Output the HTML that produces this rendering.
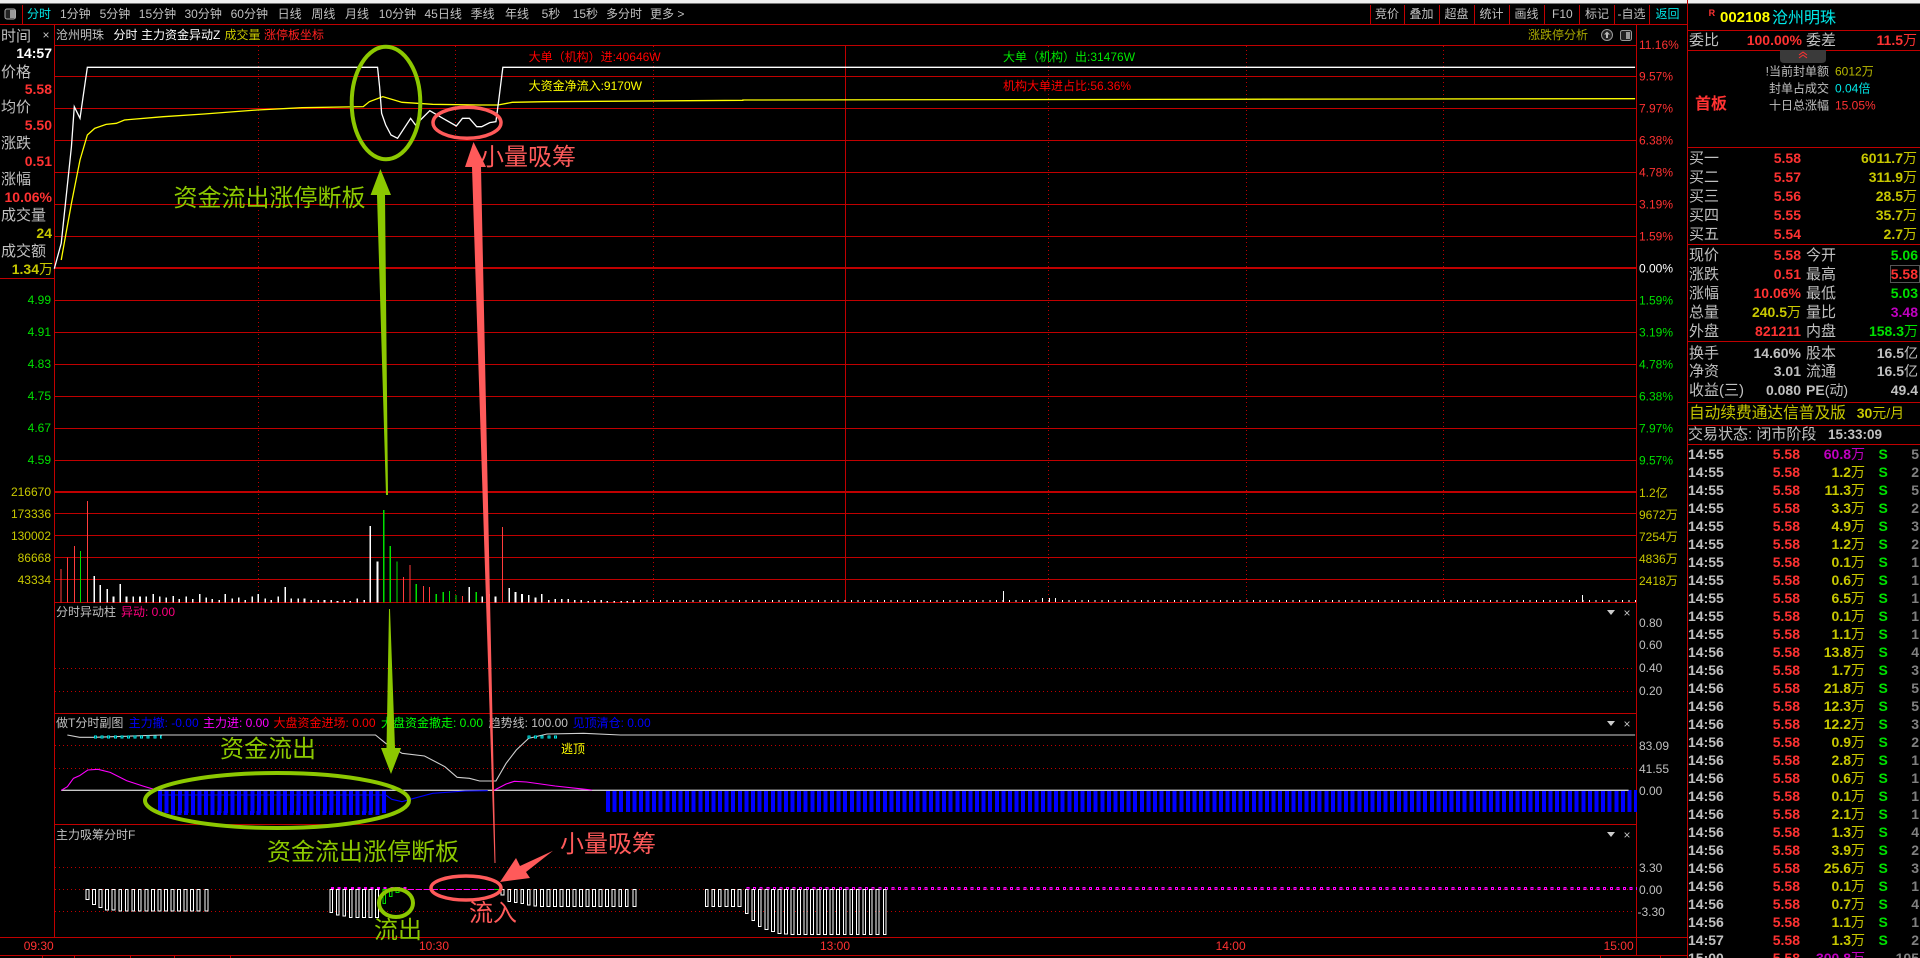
<!DOCTYPE html>
<html lang="zh"><head><meta charset="utf-8"><title>沧州明珠 分时</title>
<style>
html,body{margin:0;padding:0;background:#000;width:1920px;height:958px;overflow:hidden}
svg{display:block;position:absolute;left:0;top:0}
text{font-family:"Liberation Sans","WenQuanYi Zen Hei","Noto Sans CJK SC",sans-serif;font-size:12px;white-space:pre}
.g{fill:#c0c0c0}.y{fill:#c8c800}.r{fill:#ff3232}.gr{fill:#00e000}.c{fill:#00e8e8}.w{fill:#fff}.m{fill:#c000c0}
.l{font-size:15px;fill:#c0c0c0}
.b{font-size:14px;font-weight:700}
.wn{font-size:14px;font-weight:400}
.e{text-anchor:end}
.big{font-size:24px}
.gn{fill:#8cc800}.co{fill:#ff5a5a}
.v *{vector-effect:non-scaling-stroke}
.ae{shape-rendering:crispEdges}
</style></head><body>
<svg width="1920" height="958" viewBox="0 0 1920 958" xmlns="http://www.w3.org/2000/svg">
<rect width="1920" height="958" fill="#000"/>
<rect width="1920" height="3.5" fill="#efefef"/>

<!-- grid -->
<g class="ae" fill="none" stroke="#c00000" stroke-width="1">
<path d="M0 24.5H1687M54 45.5H1636M54 76.5H1636M54 108.5H1636M54 140.5H1636M54 172.5H1636M54 204.5H1636M54 236.5H1636M54 300.5H1636M54 332.5H1636M54 364.5H1636M54 396.5H1636M54 428.5H1636M54 460.5H1636M54 513.5H1636M54 535.5H1636M54 557.5H1636M54 579.5H1636M54 602.5H1636M54 713.5H1636M54 824.5H1636M0 937.5H1687M0 955.5H1687M0 278.5H54"/>
<path d="M54.5 24V937M1636.5 24V955M1687.5 0V958M22.5 5V24M845.5 46V602"/>
<path d="M1370.5 5V24M1404.5 5V24M1439.5 5V24M1474.5 5V24M1509.5 5V24M1544.5 5V24M1579.5 5V24M1614.5 5V24M1649.5 5V24"/>
<path d="M1687 30.5H1920M1687 50.5H1920M1687 147.5H1920M1687 244.5H1920M1687 341.5H1920M1687 402.5H1920M1687 425.5H1920M1687 444.5H1920"/>
<path d="M42.5 955V958M74.5 955V958M130.5 955V958M174.5 955V958M230.5 955V958M1600.5 955V958M1660.5 955V958"/>
<path stroke-width="2" d="M54 268H1636M54 492H1636"/>
<path stroke-dasharray="1 3" d="M258.5 46V602M455.5 46V602M653.5 46V602M1048.5 46V602M1246.5 46V602M1443.5 46V602"/>
<path stroke-dasharray="1 3" d="M55 668.5H1634M55 691.5H1634M55 745.5H1634M55 768.5H1634M55 867.5H1634M55 889.5H1634M55 911.5H1634"/>
</g>

<!-- nav -->
<rect x="5" y="9" width="10.5" height="10" rx="2" fill="#222" stroke="#aaa"/><rect x="10" y="10" width="5" height="8" fill="#999"/>
<text x="27" y="18" class="c">分时</text>
<g class="g">
<text x="60" y="18">1分钟</text><text x="99.6" y="18">5分钟</text><text x="138.8" y="18">15分钟</text><text x="184.5" y="18">30分钟</text><text x="230.6" y="18">60分钟</text><text x="277.6" y="18">日线</text><text x="311.4" y="18">周线</text><text x="345" y="18">月线</text><text x="378.8" y="18">10分钟</text><text x="424.5" y="18">45日线</text><text x="470.6" y="18">季线</text><text x="505" y="18">年线</text><text x="541.6" y="18">5秒</text><text x="572.7" y="18">15秒</text><text x="606" y="18">多分时</text><text x="650" y="18">更多 &gt;</text>
<text x="1375" y="18">竞价</text><text x="1409.5" y="18">叠加</text><text x="1444.5" y="18">超盘</text><text x="1479.5" y="18">统计</text><text x="1514.5" y="18">画线</text><text x="1552" y="18">F10</text><text x="1585" y="18">标记</text><text x="1617.5" y="18">-自选</text>
</g>
<text x="1655.5" y="18" class="c">返回</text>

<!-- left column -->
<text x="46" y="39" class="g e" style="text-anchor:middle">×</text>
<text x="1" y="41" class="l">时间</text>
<text x="52" y="58" class="b w e">14:57</text>
<text x="1" y="77" class="l">价格</text><text x="52" y="94" class="b r e">5.58</text>
<text x="1" y="112" class="l">均价</text><text x="52" y="130" class="b r e">5.50</text>
<text x="1" y="148" class="l">涨跌</text><text x="52" y="166" class="b r e">0.51</text>
<text x="1" y="184" class="l">涨幅</text><text x="52" y="202" class="b r e">10.06%</text>
<text x="1" y="220" class="l">成交量</text><text x="52" y="238" class="b y e">24</text>
<text x="1" y="256" class="l">成交额</text><text x="53" y="274" class="b y e">1.34<tspan class="wn">万</tspan></text>
<g class="gr e"><text x="51" y="304" class="gr e">4.99</text><text x="51" y="336" class="gr e">4.91</text><text x="51" y="368" class="gr e">4.83</text><text x="51" y="400" class="gr e">4.75</text><text x="51" y="432" class="gr e">4.67</text><text x="51" y="464" class="gr e">4.59</text></g>
<text x="51" y="496" class="y e">216670</text><text x="51" y="518" class="y e">173336</text><text x="51" y="540" class="y e">130002</text><text x="51" y="562" class="y e">86668</text><text x="51" y="584" class="y e">43334</text>

<!-- headers -->
<text x="56" y="39" class="g">沧州明珠</text><text x="113.5" y="39" class="w">分时</text><text x="141" y="39" class="w">主力资金异动Z</text><text x="224.5" y="39" class="y">成交量</text><text x="264" y="39" class="r" style="fill:#ff2020">涨停板坐标</text>
<text x="1528" y="39" style="fill:#a8a800">涨跌停分析</text>
<circle cx="1607" cy="35" r="5.5" fill="#222" stroke="#999"/><path d="M1607 31.5l3 3h-2v3.5h-2v-3.5h-2z" fill="#bbb"/>
<rect x="1620.5" y="30.5" width="11" height="10" rx="2" fill="#222" stroke="#999"/><rect x="1626" y="32" width="4" height="7" fill="#999"/>
<text x="56" y="616" class="g">分时异动柱</text><text x="121" y="616" style="fill:#ff0080">异动: 0.00</text>
<text x="56" y="727" class="g">做T分时副图</text><text x="128.6" y="727" style="fill:#0000ff">主力撤: -0.00</text><text x="203" y="727" style="fill:#ff00ff">主力进: 0.00</text><text x="273.5" y="727" style="fill:#ff0000">大盘资金进场: 0.00</text><text x="381" y="727" style="fill:#00ff00">大盘资金撤走: 0.00</text><text x="488.6" y="727" class="g">趋势线: 100.00</text><text x="572.6" y="727" style="fill:#0000ff">见顶清仓: 0.00</text>
<text x="56" y="839" class="g">主力吸筹分时F</text>
<text x="561" y="753" style="fill:#ffff00">逃顶</text>
<g fill="#ccc"><path d="M1607 610h8l-4 5zM1607 721h8l-4 5zM1607 832h8l-4 5z"/></g>
<g class="g" style="text-anchor:middle"><text x="1627" y="617">×</text><text x="1627" y="728">×</text><text x="1627" y="839">×</text></g>

<text x="528.6" y="61" style="fill:#ff0000">大单（机构）进:40646W</text>
<text x="528.6" y="90" style="fill:#ffff00">大资金净流入:9170W</text>
<text x="1003" y="61" style="fill:#00e800">大单（机构）出:31476W</text>
<text x="1003" y="90" style="fill:#ff0000">机构大单进占比:56.36%</text>

<!-- right axis -->
<text x="1639" y="49" class="r">11.16%</text><text x="1639" y="80.5" class="r">9.57%</text><text x="1639" y="112.5" class="r">7.97%</text><text x="1639" y="144.5" class="r">6.38%</text><text x="1639" y="176.5" class="r">4.78%</text><text x="1639" y="208.5" class="r">3.19%</text><text x="1639" y="240.5" class="r">1.59%</text><text x="1639" y="272.5" class="w">0.00%</text>
<text x="1639" y="304.5" class="gr">1.59%</text><text x="1639" y="336.5" class="gr">3.19%</text><text x="1639" y="368.5" class="gr">4.78%</text><text x="1639" y="400.5" class="gr">6.38%</text><text x="1639" y="432.5" class="gr">7.97%</text><text x="1639" y="464.5" class="gr">9.57%</text>
<text x="1639" y="497" class="y">1.2亿</text><text x="1639" y="519" class="y">9672万</text><text x="1639" y="541" class="y">7254万</text><text x="1639" y="563" class="y">4836万</text><text x="1639" y="585" class="y">2418万</text>
<g class="g"><text x="1639" y="627">0.80</text><text x="1639" y="649">0.60</text><text x="1639" y="672">0.40</text><text x="1639" y="695">0.20</text><text x="1639" y="750">83.09</text><text x="1639" y="773">41.55</text><text x="1639" y="795">0.00</text><text x="1639" y="872">3.30</text><text x="1639" y="894">0.00</text><text x="1637.5" y="916">-3.30</text></g>
<g class="r"><text x="23.7" y="950">09:30</text><text x="419" y="950">10:30</text><text x="820" y="950">13:00</text><text x="1215.6" y="950">14:00</text><text x="1603.6" y="950">15:00</text></g>

<!-- main lines -->
<g class="v" transform="scale(.40816,.33333)" fill="none" stroke-width="1.3">
<polyline stroke="#ffff00" points="150,780 175,610 196,480 214,405 232,385 260,373 285,370 305,360 400,350 500,342 630,330 740,323 890,320 905,305 938,290 985,307 1060,313 1175,315 1220,315 1255,307 1335,305 1820,301 1820,300 4006,296"/>
<polyline stroke="#ffffff" points="133,806 150,730 175,440 182,320 196,355 214,202 925,202 930,260 935,340 945,375 958,405 974,415 1006,355 1018,375 1030,360 1053,332 1085,355 1118,378 1133,355 1150,355 1168,380 1180,380 1200,368 1215,365 1222,300 1232,202 4006,202"/>
</g>

<!-- volume bars -->
<g class="v ae" transform="translate(0,480) scale(.40816,.33333)" fill="none">
<path stroke="#fff" stroke-width="1.6" d="M231 367V288M246 367V315M263 367V327M278 367V350M295 367V312M310 367V350M326 367V350M343 367V350M358 367V350M375 367V342M391 367V350M407 367V353M424 367V348M439 367V357M456 367V350M472 367V357M489 367V342M505 367V353M520 367V357M537 367V360M552 367V342M569 367V356M585 367V353M601 367V360M618 367V350M633 367V342M650 367V356M665 367V360M682 367V350M699 367V321M714 367V356M731 367V356M746 367V356M763 367V360M780 367V360M795 367V360M812 367V360M827 367V363M843 367V360M858 367V363M875 367V356M892 367V360M907 367V138M925 367V245M1150 367V321M1182 367V350M1198 367V342M1214 367V350M1248 367V324M1263 367V336M1279 367V342M1295 367V345M1312 367V353M1327 367V342M1344 367V360M1360 367V357M1376 367V357M1392 367V357M1408 367V360M1424 367V360M1441 367V363M1457 367V360M1473 367V360M1488 367V363M1505 367V363M1522 367V363M1537 367V363M1553 367V360"/>
<path stroke="#ff3c3c" stroke-width="1" d="M150 367V267M165 367V233M182 367V198M214 367V63M988 367V291M1005 367V255M1037 367V318M1052 367V321M1133 367V348M1231 367V141"/>
<path stroke="#00e000" stroke-width="1.2" d="M197 367V213M940 367V90M956 367V198M973 367V245M1020 367V312M1069 367V342M1086 367V336M1101 367V333M1117 367V345M1167 367V336"/>
</g>
<line class="ae" x1="640" y1="601" x2="1636" y2="601" stroke="#fff" stroke-width="2" stroke-dasharray="1 5.59"/>
<path class="ae" stroke="#fff" fill="none" d="M1003.5 602V591M1042.5 602V598M1049.5 602V598M1055.5 602V598M1582.5 602V595"/>

<!-- pane 3 -->
<g class="ae">
<line x1="158" y1="801.5" x2="386" y2="801.5" stroke="#0000ff" stroke-width="23" stroke-dasharray="4 2.59"/>
<line x1="171" y1="813" x2="380" y2="813" stroke="#0000ff" stroke-width="4" stroke-dasharray="4 2.59"/>
<line x1="606" y1="801" x2="1637" y2="801" stroke="#0000ff" stroke-width="22" stroke-dasharray="4 2.59"/>
</g>
<g class="v" transform="translate(0,710) scale(.40816,.33333)" fill="none" stroke-width="1.1">
<path stroke="#c8c8c8" stroke-width="1.3" d="M150 241H3990"/>
<polyline stroke="#0000ff" points="387,255 945,255 960,268 985,275 1005,268 1060,250 1140,243 1195,242"/>
<polyline stroke="#d0d0d0" points="165,75 195,82 230,82 395,75 920,75 945,100 985,130 1040,138 1090,170 1120,202 1150,205 1175,213 1215,213 1240,160 1265,120 1295,85 1340,72 1430,70 1520,75 4006,75"/>
<polyline stroke="#ff00ff" points="150,241 165,230 180,205 195,197 215,180 240,178 270,187 310,212 350,228 385,241"/>
<polyline stroke="#ff00ff" points="1210,241 1240,222 1260,214 1290,216 1360,228 1420,236 1450,240"/>
</g>
<g class="ae">
<line x1="94" y1="737" x2="162" y2="737" stroke="#00e8e8" stroke-width="3" stroke-dasharray="3 3.59"/>
<line x1="95" y1="737" x2="162" y2="737" stroke="#000" stroke-width="1" stroke-dasharray="1 5.59"/>
<line x1="527.5" y1="737" x2="557" y2="737" stroke="#00e8e8" stroke-width="3" stroke-dasharray="3 3.59"/>
<line x1="528.5" y1="737" x2="557" y2="737" stroke="#000" stroke-width="1" stroke-dasharray="1 5.59"/>
</g>

<!-- pane 4 -->
<g class="ae">
<line x1="746.5" y1="888.5" x2="1637" y2="888.5" stroke="#ff00ff" stroke-width="3" stroke-dasharray="3 3.59"/>
<line x1="747.5" y1="888.5" x2="1637" y2="888.5" stroke="#000" stroke-width="1" stroke-dasharray="1 5.59"/>
<line x1="331" y1="888.5" x2="408" y2="888.5" stroke="#ff00ff" stroke-width="3" stroke-dasharray="3 3.59"/>
<line x1="408" y1="889.5" x2="500" y2="889.5" stroke="#ff00ff" stroke-width="1" stroke-dasharray="6 2"/>
<line x1="494" y1="889.5" x2="501" y2="889.5" stroke="#00e000" stroke-width="1"/>
</g>
<g class="v ae" transform="translate(0,710) scale(.40816,.33333)" fill="#000" stroke="#fff" stroke-width="1">
<path d="M211 538h7v31h-7zM227 538h7v46h-7zM243 538h7v54h-7zM259 538h7v62h-7zM275 538h7v62h-7zM291 538h7v65h-7zM307 538h7v65h-7zM323 538h7v65h-7zM339 538h7v65h-7zM355 538h7v65h-7zM371 538h7v65h-7zM387 538h7v65h-7zM403 538h7v65h-7zM419 538h7v65h-7zM435 538h7v65h-7zM451 538h7v65h-7zM467 538h7v65h-7zM483 538h7v65h-7zM502 538h7v65h-7z"/>
<path d="M808 538h7v70h-7zM824 538h7v77h-7zM840 538h7v80h-7zM856 538h7v84h-7zM872 538h7v84h-7zM888 538h7v84h-7zM904 538h7v84h-7zM920 538h7v84h-7z"/>
<path stroke="#00e000" d="M938 538h7v42h-7zM954 538h7v22h-7zM970 538h7v10h-7z"/>
</g>
<g class="v ae" transform="translate(400,710) scale(.40816,.33333)" fill="#000" stroke="#fff" stroke-width="1">
<path d="M248 538h7v17h-7zM264 538h7v37h-7zM280 538h7v39h-7zM296 538h7v42h-7zM312 538h7v47h-7zM328 538h7v50h-7zM344 538h7v52h-7zM360 538h7v52h-7zM376 538h7v52h-7zM392 538h7v52h-7zM408 538h7v52h-7zM424 538h7v52h-7zM440 538h7v52h-7zM456 538h7v52h-7zM472 538h7v52h-7zM488 538h7v52h-7zM504 538h7v52h-7zM520 538h7v52h-7zM536 538h7v52h-7zM552 538h7v52h-7zM571 538h7v52h-7z"/>
<path d="M748 538h7v52h-7zM764 538h7v52h-7zM780 538h7v52h-7zM796 538h7v52h-7zM812 538h7v52h-7zM828 538h7v52h-7z"/>
<path d="M846 538h7v73h-7zM862 538h7v94h-7zM878 538h7v112h-7zM894 538h7v120h-7zM910 538h7v127h-7zM926 538h7v132h-7zM942 538h7v134h-7zM958 538h7v135h-7zM974 538h7v135h-7zM990 538h7v135h-7zM1006 538h7v135h-7zM1022 538h7v135h-7zM1038 538h7v135h-7zM1054 538h7v135h-7zM1070 538h7v135h-7zM1086 538h7v135h-7zM1102 538h7v135h-7zM1118 538h7v135h-7zM1134 538h7v135h-7zM1150 538h7v135h-7zM1166 538h7v135h-7zM1184 538h7v135h-7z"/>
</g>

<!-- right panel -->
<text x="1708.6" y="16" style="fill:#ff3232;font-size:9px;font-weight:700">R</text>
<text x="1720" y="22" class="b" style="fill:#ffff00;font-size:15px">002108</text>
<text x="1772" y="23" style="fill:#00e8e8;font-size:16px">沧州明珠</text>
<text x="1689" y="45" class="l">委比</text><text x="1802" y="45" class="b r e">100.00%</text><text x="1806" y="45" class="l">委差</text><text x="1917" y="45" class="b r e">11.5<tspan class="wn">万</tspan></text>
<path d="M1780 50h46v9q0 4-4 4h-38q-4 0-4-4z" fill="#3a3a3a"/><path d="M1799 55l4-3 4 3M1799 58l4-3 4 3" fill="none" stroke="#ff3232"/>
<text x="1829" y="75.5" class="g e">!当前封单额</text><text x="1835" y="75.5" style="fill:#b8b800">6012万</text>
<text x="1829" y="92.5" class="g e">封单占成交</text><text x="1835" y="92.5" class="c">0.04倍</text>
<text x="1829" y="109.5" class="g e">十日总涨幅</text><text x="1835" y="109.5" class="r">15.05%</text>
<text x="1695" y="109" style="fill:#ff3232;font-size:16px;font-weight:700">首板</text>

<text x="1689" y="163" class="l">买一</text><text x="1801" y="163" class="b r e">5.58</text><text x="1917" y="163" class="b y e">6011.7<tspan class="wn">万</tspan></text>
<text x="1689" y="182" class="l">买二</text><text x="1801" y="182" class="b r e">5.57</text><text x="1917" y="182" class="b y e">311.9<tspan class="wn">万</tspan></text>
<text x="1689" y="201" class="l">买三</text><text x="1801" y="201" class="b r e">5.56</text><text x="1917" y="201" class="b y e">28.5<tspan class="wn">万</tspan></text>
<text x="1689" y="220" class="l">买四</text><text x="1801" y="220" class="b r e">5.55</text><text x="1917" y="220" class="b y e">35.7<tspan class="wn">万</tspan></text>
<text x="1689" y="239" class="l">买五</text><text x="1801" y="239" class="b r e">5.54</text><text x="1917" y="239" class="b y e">2.7<tspan class="wn">万</tspan></text>

<text x="1689" y="260" class="l">现价</text><text x="1801" y="260" class="b r e">5.58</text><text x="1806" y="260" class="l">今开</text><text x="1918" y="260" class="b gr e">5.06</text>
<text x="1689" y="279" class="l">涨跌</text><text x="1801" y="279" class="b r e">0.51</text><text x="1806" y="279" class="l">最高</text><rect x="1890.5" y="265.5" width="29" height="17" fill="none" stroke="#555"/><text x="1918" y="279" class="b r e">5.58</text>
<text x="1689" y="298" class="l">涨幅</text><text x="1801" y="298" class="b r e">10.06%</text><text x="1806" y="298" class="l">最低</text><text x="1918" y="298" class="b gr e">5.03</text>
<text x="1689" y="317" class="l">总量</text><text x="1801" y="317" class="b y e">240.5<tspan class="wn">万</tspan></text><text x="1806" y="317" class="l">量比</text><text x="1918" y="317" class="b m e">3.48</text>
<text x="1689" y="336" class="l">外盘</text><text x="1801" y="336" class="b r e">821211</text><text x="1806" y="336" class="l">内盘</text><text x="1918" y="336" class="b gr e">158.3<tspan class="wn">万</tspan></text>
<text x="1689" y="358" class="l">换手</text><text x="1801" y="358" class="b g e">14.60%</text><text x="1806" y="358" class="l">股本</text><text x="1918" y="358" class="b g e">16.5<tspan class="wn">亿</tspan></text>
<text x="1689" y="376" class="l">净资</text><text x="1801" y="376" class="b g e">3.01</text><text x="1806" y="376" class="l">流通</text><text x="1918" y="376" class="b g e">16.5<tspan class="wn">亿</tspan></text>
<text x="1689" y="395" class="l">收益(三)</text><text x="1801" y="395" class="b g e">0.080</text><text x="1806" y="395" class="b g">PE<tspan class="wn">(动)</tspan></text><text x="1918" y="395" class="b g e">49.4</text>
<text x="1689" y="418" class="l" style="fill:#c8c800;font-size:15.7px">自动续费通达信普及版</text><text x="1856.7" y="418" class="b y">30<tspan class="wn">元/月</tspan></text>
<text x="1688" y="439" class="l">交易状态: 闭市阶段</text><text x="1828" y="439" class="b g" style="font-size:13.5px">15:33:09</text>

<!-- tape -->
<g class="b">
<g class="g b"><text x="1688" y="459" class="b">14:55</text><text x="1688" y="477" class="b">14:55</text><text x="1688" y="495" class="b">14:55</text><text x="1688" y="513" class="b">14:55</text><text x="1688" y="531" class="b">14:55</text><text x="1688" y="549" class="b">14:55</text><text x="1688" y="567" class="b">14:55</text><text x="1688" y="585" class="b">14:55</text><text x="1688" y="603" class="b">14:55</text><text x="1688" y="621" class="b">14:55</text><text x="1688" y="639" class="b">14:55</text><text x="1688" y="657" class="b">14:56</text><text x="1688" y="675" class="b">14:56</text><text x="1688" y="693" class="b">14:56</text><text x="1688" y="711" class="b">14:56</text><text x="1688" y="729" class="b">14:56</text><text x="1688" y="747" class="b">14:56</text><text x="1688" y="765" class="b">14:56</text><text x="1688" y="783" class="b">14:56</text><text x="1688" y="801" class="b">14:56</text><text x="1688" y="819" class="b">14:56</text><text x="1688" y="837" class="b">14:56</text><text x="1688" y="855" class="b">14:56</text><text x="1688" y="873" class="b">14:56</text><text x="1688" y="891" class="b">14:56</text><text x="1688" y="909" class="b">14:56</text><text x="1688" y="927" class="b">14:56</text><text x="1688" y="945" class="b">14:57</text><text x="1688" y="963" class="b">15:00</text></g>
<g><text x="1800" y="459" class="b r e">5.58</text><text x="1800" y="477" class="b r e">5.58</text><text x="1800" y="495" class="b r e">5.58</text><text x="1800" y="513" class="b r e">5.58</text><text x="1800" y="531" class="b r e">5.58</text><text x="1800" y="549" class="b r e">5.58</text><text x="1800" y="567" class="b r e">5.58</text><text x="1800" y="585" class="b r e">5.58</text><text x="1800" y="603" class="b r e">5.58</text><text x="1800" y="621" class="b r e">5.58</text><text x="1800" y="639" class="b r e">5.58</text><text x="1800" y="657" class="b r e">5.58</text><text x="1800" y="675" class="b r e">5.58</text><text x="1800" y="693" class="b r e">5.58</text><text x="1800" y="711" class="b r e">5.58</text><text x="1800" y="729" class="b r e">5.58</text><text x="1800" y="747" class="b r e">5.58</text><text x="1800" y="765" class="b r e">5.58</text><text x="1800" y="783" class="b r e">5.58</text><text x="1800" y="801" class="b r e">5.58</text><text x="1800" y="819" class="b r e">5.58</text><text x="1800" y="837" class="b r e">5.58</text><text x="1800" y="855" class="b r e">5.58</text><text x="1800" y="873" class="b r e">5.58</text><text x="1800" y="891" class="b r e">5.58</text><text x="1800" y="909" class="b r e">5.58</text><text x="1800" y="927" class="b r e">5.58</text><text x="1800" y="945" class="b r e">5.58</text><text x="1800" y="963" class="b r e">5.58</text></g>
<g><text x="1865" y="459" class="b m e">60.8<tspan class="wn">万</tspan></text><text x="1865" y="477" class="b y e">1.2<tspan class="wn">万</tspan></text><text x="1865" y="495" class="b y e">11.3<tspan class="wn">万</tspan></text><text x="1865" y="513" class="b y e">3.3<tspan class="wn">万</tspan></text><text x="1865" y="531" class="b y e">4.9<tspan class="wn">万</tspan></text><text x="1865" y="549" class="b y e">1.2<tspan class="wn">万</tspan></text><text x="1865" y="567" class="b y e">0.1<tspan class="wn">万</tspan></text><text x="1865" y="585" class="b y e">0.6<tspan class="wn">万</tspan></text><text x="1865" y="603" class="b y e">6.5<tspan class="wn">万</tspan></text><text x="1865" y="621" class="b y e">0.1<tspan class="wn">万</tspan></text><text x="1865" y="639" class="b y e">1.1<tspan class="wn">万</tspan></text><text x="1865" y="657" class="b y e">13.8<tspan class="wn">万</tspan></text><text x="1865" y="675" class="b y e">1.7<tspan class="wn">万</tspan></text><text x="1865" y="693" class="b y e">21.8<tspan class="wn">万</tspan></text><text x="1865" y="711" class="b y e">12.3<tspan class="wn">万</tspan></text><text x="1865" y="729" class="b y e">12.2<tspan class="wn">万</tspan></text><text x="1865" y="747" class="b y e">0.9<tspan class="wn">万</tspan></text><text x="1865" y="765" class="b y e">2.8<tspan class="wn">万</tspan></text><text x="1865" y="783" class="b y e">0.6<tspan class="wn">万</tspan></text><text x="1865" y="801" class="b y e">0.1<tspan class="wn">万</tspan></text><text x="1865" y="819" class="b y e">2.1<tspan class="wn">万</tspan></text><text x="1865" y="837" class="b y e">1.3<tspan class="wn">万</tspan></text><text x="1865" y="855" class="b y e">3.9<tspan class="wn">万</tspan></text><text x="1865" y="873" class="b y e">25.6<tspan class="wn">万</tspan></text><text x="1865" y="891" class="b y e">0.1<tspan class="wn">万</tspan></text><text x="1865" y="909" class="b y e">0.7<tspan class="wn">万</tspan></text><text x="1865" y="927" class="b y e">1.1<tspan class="wn">万</tspan></text><text x="1865" y="945" class="b y e">1.3<tspan class="wn">万</tspan></text><text x="1865" y="963" class="b m e">300.8<tspan class="wn">万</tspan></text></g>
<g><text x="1878.5" y="459" class="b gr">S</text><text x="1878.5" y="477" class="b gr">S</text><text x="1878.5" y="495" class="b gr">S</text><text x="1878.5" y="513" class="b gr">S</text><text x="1878.5" y="531" class="b gr">S</text><text x="1878.5" y="549" class="b gr">S</text><text x="1878.5" y="567" class="b gr">S</text><text x="1878.5" y="585" class="b gr">S</text><text x="1878.5" y="603" class="b gr">S</text><text x="1878.5" y="621" class="b gr">S</text><text x="1878.5" y="639" class="b gr">S</text><text x="1878.5" y="657" class="b gr">S</text><text x="1878.5" y="675" class="b gr">S</text><text x="1878.5" y="693" class="b gr">S</text><text x="1878.5" y="711" class="b gr">S</text><text x="1878.5" y="729" class="b gr">S</text><text x="1878.5" y="747" class="b gr">S</text><text x="1878.5" y="765" class="b gr">S</text><text x="1878.5" y="783" class="b gr">S</text><text x="1878.5" y="801" class="b gr">S</text><text x="1878.5" y="819" class="b gr">S</text><text x="1878.5" y="837" class="b gr">S</text><text x="1878.5" y="855" class="b gr">S</text><text x="1878.5" y="873" class="b gr">S</text><text x="1878.5" y="891" class="b gr">S</text><text x="1878.5" y="909" class="b gr">S</text><text x="1878.5" y="927" class="b gr">S</text><text x="1878.5" y="945" class="b gr">S</text></g>
<g style="fill:#808080"><text x="1919" y="459" class="b e">5</text><text x="1919" y="477" class="b e">2</text><text x="1919" y="495" class="b e">5</text><text x="1919" y="513" class="b e">2</text><text x="1919" y="531" class="b e">3</text><text x="1919" y="549" class="b e">2</text><text x="1919" y="567" class="b e">1</text><text x="1919" y="585" class="b e">1</text><text x="1919" y="603" class="b e">1</text><text x="1919" y="621" class="b e">1</text><text x="1919" y="639" class="b e">1</text><text x="1919" y="657" class="b e">4</text><text x="1919" y="675" class="b e">3</text><text x="1919" y="693" class="b e">5</text><text x="1919" y="711" class="b e">5</text><text x="1919" y="729" class="b e">3</text><text x="1919" y="747" class="b e">2</text><text x="1919" y="765" class="b e">1</text><text x="1919" y="783" class="b e">1</text><text x="1919" y="801" class="b e">1</text><text x="1919" y="819" class="b e">1</text><text x="1919" y="837" class="b e">4</text><text x="1919" y="855" class="b e">2</text><text x="1919" y="873" class="b e">3</text><text x="1919" y="891" class="b e">1</text><text x="1919" y="909" class="b e">4</text><text x="1919" y="927" class="b e">1</text><text x="1919" y="945" class="b e">2</text><text x="1919" y="963" class="b e">105</text></g>
</g>

<!-- annotations -->
<g fill="none" stroke-width="4" stroke="#8cc800">
<ellipse cx="386" cy="103" rx="34.3" ry="56.3"/>
<ellipse cx="277" cy="800.5" rx="132" ry="27.5"/>
<ellipse cx="396" cy="903" rx="17" ry="14"/>
</g>
<g fill="none" stroke-width="3.5" stroke="#ff5a5a">
<ellipse cx="467" cy="122.7" rx="34" ry="15.5"/>
<ellipse cx="466" cy="888" rx="35" ry="12"/>
</g>
<g fill="#8cc800">
<polygon points="380.4,169 391,195 385,195 388,495 386,495 377,195 370.6,195"/>
<polygon points="389,609 390,609 395,748 401,748 391,774 381,748 386.5,748"/>
</g>
<g fill="#ff5a5a">
<polygon points="473.5,142 486,167 481,167 495.5,863 494.5,863 472,167 465,167"/>
<polygon points="553,850.7 526,872 530,878 500,882 516,858 520,866"/>
</g>
<g class="big">
<text x="173.5" y="206" class="big gn">资金流出涨停断板</text>
<text x="480" y="165" class="big co">小量吸筹</text>
<text x="220" y="757" class="big gn">资金流出</text>
<text x="267" y="860" class="big gn">资金流出涨停断板</text>
<text x="560" y="852" class="big co">小量吸筹</text>
<text x="469" y="921" class="big co">流入</text>
<text x="374" y="938" class="big gn">流出</text>
</g>
</svg>
</body></html>
